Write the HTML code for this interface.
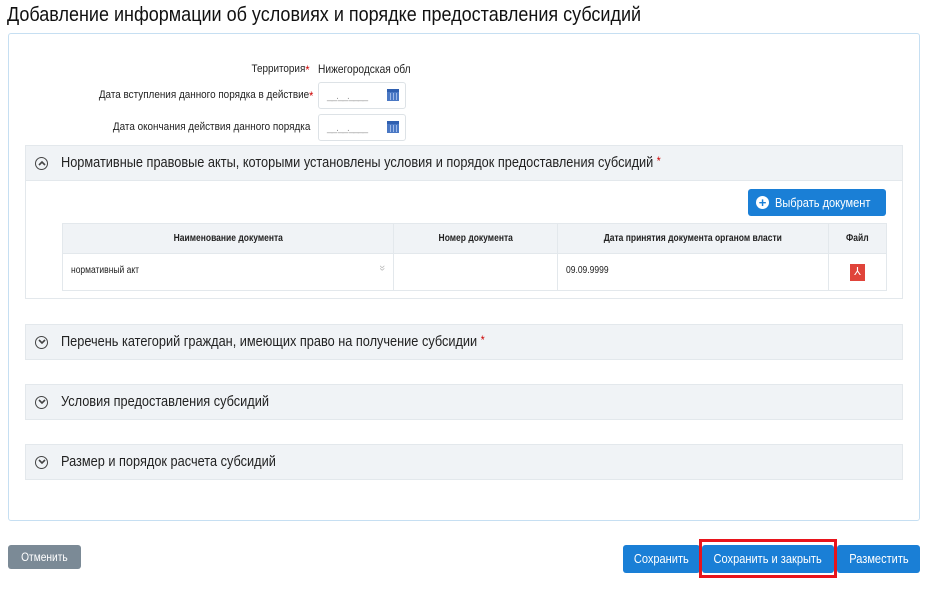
<!DOCTYPE html>
<html><head><meta charset="utf-8"><style>
*{box-sizing:border-box;margin:0;padding:0}
body{width:931px;height:591px;background:#fff;font-family:"Liberation Sans",sans-serif;color:#222;position:relative;overflow:hidden}
.a{position:absolute;white-space:nowrap}
.n{display:inline-block;transform:scaleX(.85);transform-origin:left center}
.nr{display:inline-block;transform:scaleX(.9);transform-origin:right center}
.nc{display:inline-block;transform:scaleX(.85);transform-origin:center center}
.hdr{position:absolute;left:25px;width:878px;height:36px;background:#f0f3f6;border:1px solid #e3e8ec}
.hdr .t{position:absolute;left:35px;top:8px;font-size:15px;color:#222;white-space:nowrap}
.ic{position:absolute;left:9px;top:11px;width:13px;height:13px;border:1.6px solid #444;border-radius:50%}
.ic svg{position:absolute;left:1.5px;top:2px}
.star{color:#c00;font-size:12px;vertical-align:top}
.lbl{font-size:11px;color:#222}
.inp{position:absolute;left:318px;width:88px;height:27px;border:1px solid #dde2e6;border-radius:3px;background:#fff}
.inp .d{position:absolute;left:8px;top:8px;font-size:10px;color:#999;letter-spacing:-1px}
.cal{position:absolute;left:68px;top:6px;width:12px;height:12px;background:#4a78c4;border-top:3px solid #2f5fb0}
.cal:after{content:"";position:absolute;left:1px;top:1px;width:10px;height:7px;background:repeating-linear-gradient(90deg,#4a78c4 0 2px,#9db8e8 2px 3px)}
.btn{position:absolute;background:#1a7fd6;color:#fff;border-radius:3px;font-size:13px;text-align:center;white-space:nowrap}
th,td{border:1px solid #e3e8ec}
</style></head><body>
<div class="a" style="left:7px;top:4px;font-size:20px;color:#111"><span class="n" style="transform:scaleX(.9)">Добавление информации об условиях и порядке предоставления субсидий</span></div>
<div class="a" style="left:8px;top:33px;width:912px;height:488px;border:1px solid #c6dff2;border-radius:3px"></div>

<div class="a lbl" style="right:621px;top:63px"><span class="nr">Территория<span class="star">*</span></span></div>
<div class="a" style="left:318px;top:62px;font-size:12px"><span class="n">Нижегородская обл</span></div>
<div class="a lbl" style="right:618px;top:89px"><span class="nr">Дата вступления данного порядка в действие<span class="star">*</span></span></div>
<div class="a lbl" style="right:621px;top:121px"><span class="nr">Дата окончания действия данного порядка</span></div>
<div class="inp" style="top:82px"><span class="d">__.__.____</span><span class="cal"></span></div>
<div class="inp" style="top:114px"><span class="d">__.__.____</span><span class="cal"></span></div>

<div class="hdr" style="top:145px"><div class="ic"><svg width="8" height="6" viewBox="0 0 8 6"><path d="M1 5L4 2L7 5" stroke="#444" stroke-width="1.6" fill="none"/></svg></div><div class="t"><span class="n">Нормативные правовые акты, которыми установлены условия и порядок предоставления субсидий <span class="star">*</span></span></div></div>
<div class="a" style="left:25px;top:180px;width:878px;height:119px;border:1px solid #e3e8ec;border-top:none"></div>
<div class="btn" style="left:748px;top:189px;width:138px;height:27px;"><span style="position:absolute;left:8px;top:7px;width:13px;height:13px;background:#fff;border-radius:50%;color:#1a7fd6;font-size:13px;line-height:13px;font-weight:bold">+</span><span class="a" style="left:27px;top:6px;font-size:13px"><span class="n">Выбрать документ</span></span></div>
<table class="a" style="left:62px;top:223px;width:825px;border-collapse:collapse;font-size:10px">
<tr style="height:30px;background:#f0f3f6"><th style="width:331px;font-weight:bold"><span class="nc">Наименование документа</span></th><th style="width:164px"><span class="nc">Номер документа</span></th><th style="width:271px"><span class="nc">Дата принятия документа органом власти</span></th><th><span class="nc">Файл</span></th></tr>
<tr style="height:37px;vertical-align:top"><td style="position:relative;padding:11px 8px"><span class="n">нормативный акт</span><span style="position:absolute;right:8px;top:8px;color:#bbb;font-size:11px;transform:rotate(90deg);display:inline-block">»</span></td><td></td><td style="padding:11px 8px"><span class="n">09.09.9999</span></td><td style="position:relative"><span style="position:absolute;left:21px;top:10px;width:15px;height:17px;background:#e0443a;color:#fff;font-size:11px;text-align:center;line-height:17px">⅄</span></td></tr>
</table>

<div class="hdr" style="top:324px"><div class="ic"><svg width="8" height="6" viewBox="0 0 8 6"><path d="M1 1L4 4L7 1" stroke="#444" stroke-width="1.6" fill="none"/></svg></div><div class="t"><span class="n">Перечень категорий граждан, имеющих право на получение субсидии <span class="star">*</span></span></div></div>
<div class="hdr" style="top:384px"><div class="ic"><svg width="8" height="6" viewBox="0 0 8 6"><path d="M1 1L4 4L7 1" stroke="#444" stroke-width="1.6" fill="none"/></svg></div><div class="t"><span class="n">Условия предоставления субсидий</span></div></div>
<div class="hdr" style="top:444px"><div class="ic"><svg width="8" height="6" viewBox="0 0 8 6"><path d="M1 1L4 4L7 1" stroke="#444" stroke-width="1.6" fill="none"/></svg></div><div class="t"><span class="n">Размер и порядок расчета субсидий</span></div></div>

<div class="btn" style="left:8px;top:545px;width:73px;height:24px;background:#7b8a96;font-size:12px;line-height:24px"><span class="nc">Отменить</span></div>
<div class="btn" style="left:623px;top:545px;width:77px;height:28px;line-height:28px"><span class="nc">Сохранить</span></div>
<div class="btn" style="left:702px;top:545px;width:132px;height:28px;line-height:28px"><span class="nc">Сохранить и закрыть</span></div>
<div class="a" style="left:699px;top:539px;width:138px;height:39px;border:3px solid #e8141c"></div>
<div class="btn" style="left:837px;top:545px;width:83px;height:28px;line-height:28px"><span class="nc">Разместить</span></div>
</body></html>
